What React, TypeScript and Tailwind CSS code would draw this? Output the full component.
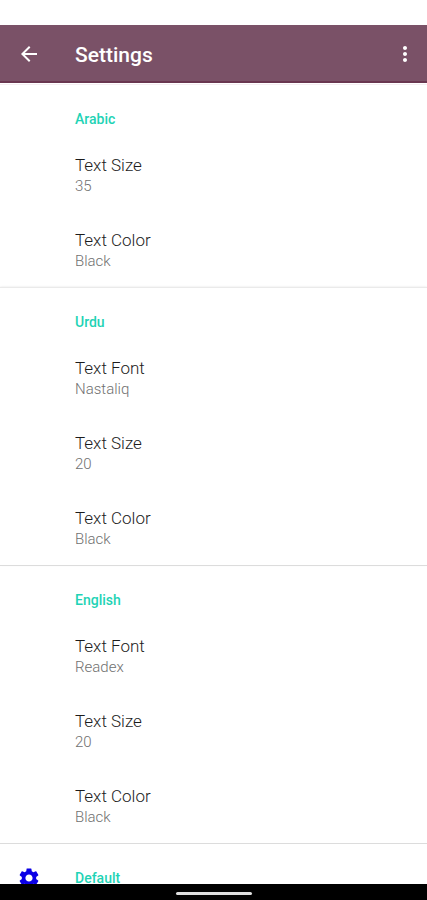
import { MdArrowBack, MdMoreVert, MdSettings } from "react-icons/md";

type Item = { title: string; value: string };
type Section = { name: string; border: string; items: Item[] };

const sections: Section[] = [
    {
        name: 'Arabic',
        border: 'border-[#f5eef2]',
        items: [
            { title: 'Text Size', value: '35' },
            { title: 'Text Color', value: 'Black' },
        ],
    },
    {
        name: 'Urdu',
        border: 'border-[#eaeaea] shadow-[0_0_2px_#e4e4e4]',
        items: [
            { title: 'Text Font', value: 'Nastaliq' },
            { title: 'Text Size', value: '20' },
            { title: 'Text Color', value: 'Black' },
        ],
    },
    {
        name: 'English',
        border: 'border-[#dcdcdc]',
        items: [
            { title: 'Text Font', value: 'Readex' },
            { title: 'Text Size', value: '20' },
            { title: 'Text Color', value: 'Black' },
        ],
    },
    { name: 'Default', border: 'border-[#dcdcdc]', items: [] },
];

const SettingRow = ({ title, value }: Item) => (
    <button type="button" className="flex h-[75px] w-full flex-col justify-center pt-px pl-[75px] text-left">
        <span className="text-[17px] leading-[21px] font-light text-[#1c1c1c]">{title}</span>
        <span className="text-[15px] leading-[20px] font-light text-[#707070]">{value}</span>
    </button>
);

const App = () => {
    return (
        <div className="flex h-screen flex-col bg-white font-['Roboto',sans-serif]">
            {/* Status bar space */}
            <div className="h-[25px] shrink-0" />

            <header className="flex h-[58px] shrink-0 items-center border-b-2 border-[#693650] bg-[#7a5167] pt-[2px] pr-[10px] pl-[17px] text-white">
                <button type="button" aria-label="Back">
                    <MdArrowBack size={24} />
                </button>
                <h1 className="ml-[34px] flex-1 pt-[2px] text-[21px] leading-[26px] font-medium">Settings</h1>
                <button type="button" aria-label="More options">
                    <MdMoreVert size={24} />
                </button>
            </header>

            <main className="min-h-0 flex-1 overflow-hidden pt-px">
                {sections.map((section) => (
                    <section key={section.name} className={`border-t ${section.border}`}>
                        <div className="flex items-center pt-6 pb-2">
                            {/* Only the last group has an icon */}
                            <div className="flex h-5 w-[75px] items-center pl-[17px]">
                                {section.name === 'Default' && <MdSettings size={24} className="shrink-0 text-[#0b00e6]" />}
                            </div>
                            <h2 className="text-[14px] leading-[20px] font-medium text-[#1fd3b5]">{section.name}</h2>
                        </div>
                        {section.items.map((item) => (
                            <SettingRow key={item.title} title={item.title} value={item.value} />
                        ))}
                    </section>
                ))}
            </main>

            {/* Gesture bar */}
            <div className="flex h-4 shrink-0 items-center justify-center bg-black pt-[2px]">
                <div className="h-[3px] w-[76px] rounded-full bg-[#dedede]" />
            </div>
        </div>
    );
}

export default App;
